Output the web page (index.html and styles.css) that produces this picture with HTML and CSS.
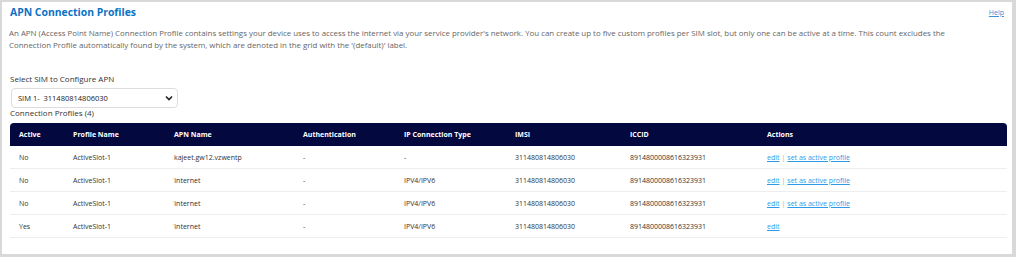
FILE: index.html
```html
<!DOCTYPE html>
<html lang="en">
<head>
    <meta charset="UTF-8">
    <title>APN Connection Profiles</title>
    <link rel="stylesheet" href="styles.css">
</head>
<body>
    <div class="panel">
        <div class="panel-head">
            <h1>APN Connection Profiles</h1>
            <a href="#" class="help-link">Help</a>
        </div>
        <p class="intro">An APN (Access Point Name) Connection Profile contains settings your device uses to access the internet via your service provider's network. You can create up to five custom profiles per SIM slot, but only one can be active at a time. This count excludes the Connection Profile automatically found by the system, which are denoted in the grid with the '(default)' label.</p>

        <label class="sim-label" for="sim-select">Select SIM to Configure APN</label>
        <div class="sim-select" id="sim-select">
            <span>SIM 1-&nbsp; 311480814806030</span>
            <svg class="chevron" width="8" height="6" viewBox="0 0 8 6"><path d="M1 1.5 L4 4.5 L7 1.5" fill="none" stroke="#222" stroke-width="1.6"/></svg>
        </div>

        <div class="count">Connection Profiles (4)</div>

        <table class="profiles">
            <thead>
                <tr>
                    <th class="c-active">Active</th>
                    <th class="c-name">Profile Name</th>
                    <th class="c-apn">APN Name</th>
                    <th class="c-auth">Authentication</th>
                    <th class="c-ip">IP Connection Type</th>
                    <th class="c-imsi">IMSI</th>
                    <th class="c-iccid">ICCID</th>
                    <th>Actions</th>
                </tr>
            </thead>
            <tbody>
                <tr>
                    <td>No</td>
                    <td>ActiveSlot-1</td>
                    <td>kajeet.gw12.vzwentp</td>
                    <td>-</td>
                    <td>-</td>
                    <td>311480814806030</td>
                    <td>8914800008616323931</td>
                    <td><a href="#">edit</a><span class="sep">|</span><a href="#">set as active profile</a></td>
                </tr>
                <tr>
                    <td>No</td>
                    <td>ActiveSlot-1</td>
                    <td><span class="tick">ˈ</span>internet</td>
                    <td>-</td>
                    <td>IPV4/IPV6</td>
                    <td>311480814806030</td>
                    <td>8914800008616323931</td>
                    <td><a href="#">edit</a><span class="sep">|</span><a href="#">set as active profile</a></td>
                </tr>
                <tr>
                    <td>No</td>
                    <td>ActiveSlot-1</td>
                    <td><span class="tick">ˈ</span>internet</td>
                    <td>-</td>
                    <td>IPV4/IPV6</td>
                    <td>311480814806030</td>
                    <td>8914800008616323931</td>
                    <td><a href="#">edit</a><span class="sep">|</span><a href="#">set as active profile</a></td>
                </tr>
                <tr>
                    <td>Yes</td>
                    <td>ActiveSlot-1</td>
                    <td><span class="tick">ˈ</span>internet</td>
                    <td>-</td>
                    <td>IPV4/IPV6</td>
                    <td>311480814806030</td>
                    <td>8914800008616323931</td>
                    <td><a href="#">edit</a></td>
                </tr>
            </tbody>
        </table>
    </div>
</body>
</html>
```

FILE: styles.css
```css
* {
    box-sizing: border-box;
    margin: 0;
    padding: 0;
}

body {
    font-family: 'Open Sans', sans-serif;
    background-color: #d9d9d9;
    padding: 2px 4px 3px 2px;
    color: #333;
}

.panel {
    background: #fff;
    height: 252px;
    padding: 3px 6px 0 7px;
}

.panel-head {
    display: flex;
    justify-content: space-between;
    align-items: flex-start;
}

h1 {
    font-size: 10.4px;
    font-weight: 700;
    color: #0b72c4;
    line-height: 14px;
    margin-left: 1px;
}

.help-link {
    font-size: 7px;
    color: #3a8fd6;
    margin-top: 3px;
    margin-right: 2px;
}

.intro {
    font-size: 7.9px;
    line-height: 12px;
    color: #666;
    margin-top: 8px;
    max-width: 975px;
}

.sim-label {
    display: block;
    font-size: 8px;
    color: #333;
    margin-top: 22px;
    line-height: 12px;
    margin-left: 1px;
}

.sim-select {
    width: 167px;
    height: 20px;
    margin-top: 3px;
    margin-left: 2px;
    border: 1px solid #ddd;
    border-radius: 4px;
    display: flex;
    align-items: center;
    justify-content: space-between;
    padding: 0 4px 0 6px;
    font-size: 7.5px;
    color: #222;
}

.count {
    font-size: 8px;
    line-height: 10px;
    margin-left: 1px;
}

.profiles {
    width: 997px;
    margin-left: 1px;
    margin-top: 5px;
    border-collapse: separate;
    border-spacing: 0;
    font-size: 7px;
}

.profiles th {
    background: #03083f;
    color: #fff;
    font-weight: 700;
    text-align: left;
    height: 23px;
    padding: 0 9px;
}

.profiles th:first-child {
    border-top-left-radius: 4px;
}

.profiles th:last-child {
    border-top-right-radius: 4px;
}

.c-active { width: 54px; }
.c-name { width: 101px; }
.c-apn { width: 129px; }
.c-auth { width: 101px; }
.c-ip { width: 111px; }
.c-imsi { width: 115px; }
.c-iccid { width: 137px; }

.profiles td {
    height: 23px;
    padding: 0 9px;
    color: #333;
    border-bottom: 1px solid #eee;
}

.profiles a {
    color: #2f9ae8;
}

.sep {
    color: #aaa;
    margin: 0 2px;
}

.tick {
    color: #888;
    margin-left: -2px;
}
```
